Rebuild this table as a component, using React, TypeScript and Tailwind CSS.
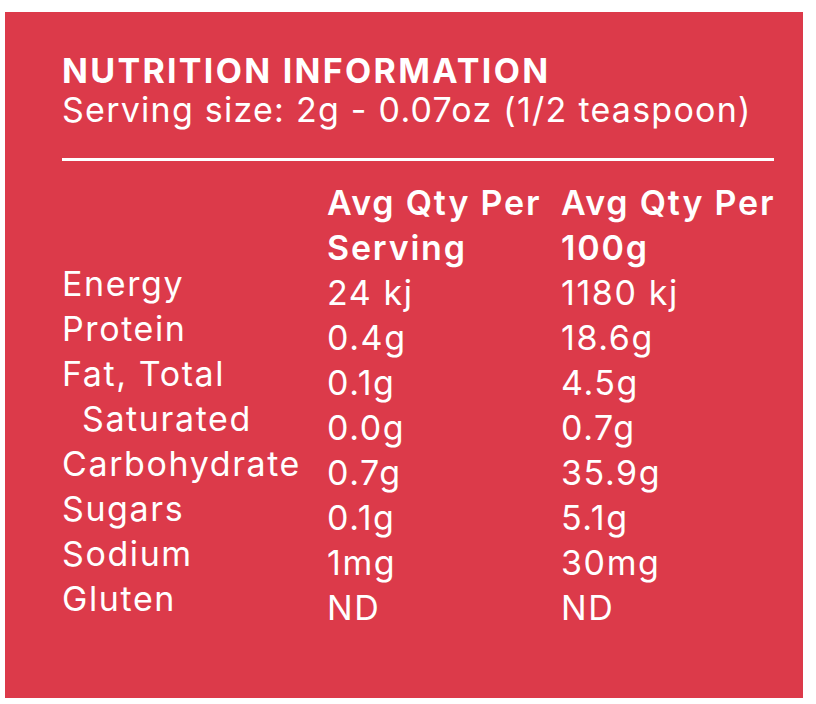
import React from "react";

const labels: { text: string; indent?: boolean }[] = [
  { text: "Energy" },
  { text: "Protein" },
  { text: "Fat, Total" },
  { text: "Saturated", indent: true },
  { text: "Carbohydrate" },
  { text: "Sugars" },
  { text: "Sodium" },
  { text: "Gluten" },
];
const perServing = ["24 kj", "0.4g", "0.1g", "0.0g", "0.7g", "0.1g", "1mg", "ND"];
const per100 = ["1180 kj", "18.6g", "4.5g", "0.7g", "35.9g", "5.1g", "30mg", "ND"];

export default function App() {
  return (
    <div
      className="w-[816px] h-[704px] bg-white pt-[12px] pl-[5px] text-white"
      style={{ fontFamily: "Inter, 'Liberation Sans', sans-serif" }}
    >
      <div className="w-[798px] h-[686px] bg-[#dc3a4a] pl-[57px] pt-[39px]">
        <div className="text-[34px] leading-[39px] font-bold tracking-[2.3px]">NUTRITION INFORMATION</div>
        <div className="text-[34px] leading-[39px] font-normal tracking-[1.25px]">
          Serving size: 2g - 0.07oz (1/2 teaspoon)
        </div>
        <div className="w-[712px] h-[3px] bg-white mt-[29px]" />
        <div className="flex mt-[19px] text-[34px] leading-[45px] tracking-[1.6px]">
          <div className="w-[265px] flex flex-col pt-[81px]">
            {labels.map((l) => (
              <div key={l.text} className={l.indent ? "pl-[20px]" : ""}>
                {l.text}
              </div>
            ))}
          </div>
          <div className="w-[234px] flex flex-col">
            <div className="font-semibold tracking-[1.8px] whitespace-nowrap">Avg Qty Per</div>
            <div className="font-semibold tracking-[1.8px]">Serving</div>
            {perServing.map((v, i) => (
              <div key={i}>{v}</div>
            ))}
          </div>
          <div className="flex flex-col">
            <div className="font-semibold tracking-[1.8px] whitespace-nowrap">Avg Qty Per</div>
            <div className="font-semibold tracking-[1.8px]">100g</div>
            {per100.map((v, i) => (
              <div key={i}>{v}</div>
            ))}
          </div>
        </div>
      </div>
    </div>
  );
}
